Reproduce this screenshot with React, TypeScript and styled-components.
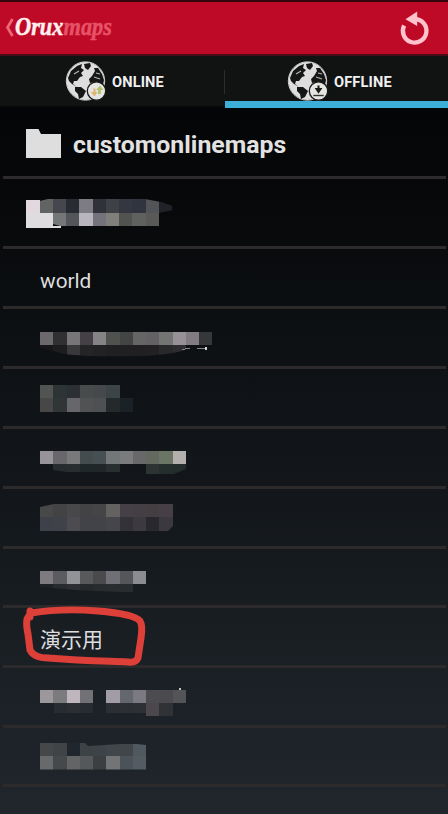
import React from "react";
import styled, { createGlobalStyle } from "styled-components";

const GlobalStyle = createGlobalStyle`
  *, *::before, *::after { box-sizing: border-box; }
  body { margin: 0; background: #050608; }
`;

const Screen = styled.div`
  width: 448px;
  height: 814px;
  overflow: hidden;
  display: flex;
  flex-direction: column;
  font-family: Roboto, "Noto Sans CJK SC", sans-serif;
  color: #dededf;
  background: linear-gradient(#040506 108px, #080a0c 240px, #0e1114 350px, #13171b 500px, #1a1f24 650px, #20262c 814px);
`;

const ActionBar = styled.header`
  height: 56px;
  flex: none;
  display: flex;
  align-items: center;
  justify-content: space-between;
  padding: 0 18px 0 5px;
  background: #bf0a27;
  border-top: 2px solid #35060c;
  border-bottom: 2px solid #490b15;
`;

const Tabs = styled.nav`
  height: 52px;
  flex: none;
  display: grid;
  grid-template-columns: 225px 223px;
  background: #111212;
`;

const Tab = styled.div<{ $active?: boolean }>`
  display: flex;
  align-items: flex-start;
  gap: 6px;
  padding: 4px 0 0 ${(p) => (p.$active ? 62 : 65)}px;
  height: 52px;
  border-bottom: ${(p) => (p.$active ? "7px solid #3caed7" : "2px solid #060707")};
`;

const Divider = styled.i`
  width: 1px;
  height: 24px;
  margin: 10px 0 0 auto;
  background: #2b2c2c;
`;

const TabLabel = styled.span`
  font-size: 14.6px;
  font-weight: 700;
  line-height: 20px;
  margin-top: 12px;
  letter-spacing: 0.15px;
  color: #f0f0f0;
  white-space: nowrap;
`;

const List = styled.main`
  padding: 0 2px 0 3px;
  display: flex;
  flex-direction: column;
`;

const Row = styled.div<{ $h: number; $top?: number; $left?: number }>`
  position: relative;
  height: ${(p) => p.$h}px;
  flex: none;
  display: flex;
  align-items: flex-start;
  padding: ${(p) => p.$top ?? 0}px 0 0 ${(p) => p.$left ?? 37}px;
  border-bottom: 3px solid #2d2a2b;
`;

const FolderName = styled.span`
  font-size: 24.8px;
  font-weight: 700;
  line-height: 30px;
  margin: 1px 0 0 12px;
  letter-spacing: 0.03px;
  color: #e2e2e2;
`;

const MapName = styled.span<{ $size?: number }>`
  font-size: ${(p) => p.$size ?? 20.8}px;
  line-height: 28px;
`;

const Drawing = styled.svg`
  display: block;
  flex: none;
  overflow: visible;
`;

const Marker = styled(Drawing)`
  position: absolute;
  left: 18px;
  top: -5px;
  z-index: 1;
`;

const CELL = 13.25;

type MosaicProps = { id: string; rows: string[][]; clip: string; children?: React.ReactNode };

function Mosaic({ id, rows, clip, children }: MosaicProps) {
  return (
    <Drawing width="180" height="27" viewBox="0 0 180 27" shapeRendering="crispEdges">
      <clipPath id={id}><path d={clip} /></clipPath>
      <g clipPath={`url(#${id})`}>
        {rows.map((row, y) => row.map((color, x) => (
          <rect key={`${x}-${y}`} x={x * CELL} y={y * CELL} width={CELL} height={CELL} fill={color || "none"} />
        )))}
      </g>
      {children}
    </Drawing>
  );
}

function Logo() {
  return (
    <Drawing width="110" height="36" viewBox="0 0 110 36">
      <path d="M7.5 9 2.5 17.5 7.5 26" fill="none" stroke="#ed6877" strokeWidth="2.7" />
      <text x="10" y="24.5" fontFamily="Liberation Serif, serif" fontStyle="italic" fontWeight="700" fontSize="26" textLength="97" lengthAdjust="spacingAndGlyphs" strokeWidth=".5">
        <tspan fill="#fff0f0" stroke="#fff0f0">Orux</tspan>
        <tspan fill="#e65367" stroke="#e65367">maps</tspan>
      </text>
    </Drawing>
  );
}

function Refresh() {
  return (
    <Drawing width="30" height="36" viewBox="398 10 30 36">
      <path d="M402.1 25.5A11.8 11.8 0 1 0 413 19" fill="none" stroke="#ffc3cd" strokeWidth="4.3" />
      <path d="M403.5 19.2 415.2 11.5V26Z" fill="#ffc3cd" />
    </Drawing>
  );
}

function Globe({ offline }: { offline?: boolean }) {
  return (
    <Drawing width="41" height="42" viewBox="0 0 41 42">
      <circle cx="20.5" cy="21" r="19.2" fill="#111212" stroke="#cacaca" strokeWidth="1" />
      <circle cx="20.5" cy="21" r="18.9" fill="#dedede" />
      <g fill="#151616">
        <path d="M3 18 6 11 12 6 17 4 16 8 19 10 16 13 18 16 15 17 12 21 9 21 8 24 12 27 7 24 4 21Z" />
        <path d="M19 4 25 3 26 6 23 10 20 8Z" />
        <path d="M10 27 16 27 21 31 18 37 14 39 13 34 10 31Z" />
        <path d="M27 16 30 11 29 8 33 8 37 14 39 20 38 25 33 25 30 22 25 23 24 19Z" />
      </g>
      <path d="M9 14 14 11M29 17 35 19M31 13 35 14" stroke="#b4b4b4" strokeWidth="1.2" />
      <circle cx="31.5" cy="31" r="9.2" fill="#e5e5e1" stroke="#171818" strokeWidth="1.3" />
      {offline ? (
        <>
          <path d="M31.5 25.5V29.5M29.5 29 31.5 32 33.5 29Z" fill="#191919" stroke="#191919" strokeWidth="2" />
          <path d="M26.3 35.5H36.7" stroke="#333" strokeWidth="1.4" />
        </>
      ) : (
        <>
          <path d="M28.5 28V32H25.8L29.5 36.5 32.5 32H30.5V29Z" fill="#e2b46f" />
          <path d="M33 34.5V30H31L35 25.5 38.5 30H36V33.5Z" fill="#b5c371" />
        </>
      )}
    </Drawing>
  );
}

function Folder() {
  return (
    <Drawing width="35" height="29" viewBox="0 0 35 29">
      <path d="M0 0H12.5L15 5H35V29H0Z" fill="#dedede" />
    </Drawing>
  );
}

export default function App() {
  return (
    <>
      <GlobalStyle />
      <Screen>
        <ActionBar><Logo /><Refresh /></ActionBar>
        <Tabs>
          <Tab><Globe /><TabLabel>ONLINE</TabLabel><Divider /></Tab>
          <Tab $active><Globe offline /><TabLabel>OFFLINE</TabLabel></Tab>
        </Tabs>
        <List>
          <Row $h={71} $top={21} $left={23}><Folder /><FolderName>customonlinemaps</FolderName></Row>
          <Row $h={70} $top={20} $left={23}>
            <Drawing width="150" height="29" viewBox="0 0 150 29">
              <path d="M0 1H14V14H27V27L35 27V29H0Z" fill="#dfdce0" />
              <path d="M0 1H13V13H0Z" fill="#e6d5df" opacity=".65" />
              <clipPath id="folder-cover"><path d="M13.5 2 22 0H119L135 3 147 7V11L133 14V27H34L27 25V14H13.5Z" /></clipPath>
              <g clipPath="url(#folder-cover)" shapeRendering="crispEdges">
                {["#626363", "#45464e", "#292b33", "#7d7c82", "#303139", "#3e4146", "#34373f", "#30343e", "#535457", "#202228"].map((c, i) => (
                  <rect key={i} x={13.5 + i * CELL} width={CELL} height="13.5" fill={c} />
                ))}
                {["#dddfe0", "#747777", "#54555b", "#b8b6bc", "#74737b", "#817f79", "#50534f", "#5e615e", "#595a58"].map((c, i) => (
                  <rect key={i} x={13.5 + i * CELL} y="13.5" width={CELL} height="13.5" fill={c} />
                ))}
              </g>
            </Drawing>
          </Row>
          <Row $h={60} $top={18}><MapName>world</MapName></Row>
          <Row $h={60} $top={23}>
            <Mosaic id="m4" clip="M0 0H173V13.3L145 18Q125 24 92 24Q45 25 25 22L0 16Z" rows={[
              ["#6b696b", "#303033", "#777577", "#444046", "#858386", "#505250", "#424543", "#656565", "#646164", "#757474", "#969196", "#827b82", "#353739"],
              ["#171719", "#1d1c1f", "#39383b", "#242326", "#222124", "#211f22", "#202023", "#211f22", "#222022", "#29282b", "#2d2c2f"],
            ]}>
              <path d="M142 17.5 150 16M157 16.5H166" stroke="#858585" strokeWidth="1" />
              <circle cx="166" cy="16.5" r="1.3" fill="#d3d3d3" />
            </Mosaic>
          </Row>
          <Row $h={60} $top={16}>
            <Mosaic id="m5" clip="M0 0H80V13H93V27H0Z" rows={[
              ["#525451", "#2d3435", "#2c2f34", "#474b4c", "#45494b", "#3c4447"],
              ["#474747", "#303536", "#67666b", "#515254", "#4e5051", "#24292c", "#1b2227"],
            ]} />
          </Row>
          <Row $h={60} $top={22}>
            <Mosaic id="m6" clip="M0 0H146V18L134 23H106V13H80V21H27L13 19V13H0Z" rows={[
              ["#969399", "#69666c", "#79797c", "#454c4e", "#465052", "#747777", "#797b7d", "#68686b", "#64695f", "#6b7566", "#b2afad"],
              ["", "#272d2e", "#272e2f", "#202729", "#202728", "#292f2f", "", "", "#2b3333", "#242e2d", "#242d2c"],
            ]} />
          </Row>
          <Row $h={60} $top={15}>
            <Mosaic id="m7" clip="M0 3 14 0H133V22L128 27H0Z" rows={[
              ["#484849", "#434345", "#48484a", "#434346", "#454548", "#636261", "#454046", "#433f44", "#443e43", "#463f45"],
              ["#3e4149", "#404249", "#4b4b50", "#424249", "#424249", "#45454b", "#333238", "#3c393f", "#29282e", "#3b383f"],
            ]} />
          </Row>
          <Row $h={59} $top={22}>
            <Mosaic id="m8" clip="M0 0H106V13.3H93V21H80L35 19 0 16Z" rows={[
              ["#7d7b7f", "#5b5c60", "#919397", "#58595a", "#4a4a4c", "#6f7075", "#555659", "#8b8c92"],
              ["#1e2226", "#282b2e", "#2c2e31", "#26292c", "#292c2e", "#2a2c2f", "#292c2f"],
            ]} />
          </Row>
          <Row $h={60} $top={18}>
            <MapName $size={21}>演示用</MapName>
            <Marker width="132" height="66" viewBox="21 603 132 66">
              <path d="M30 611V617M31 613Q62 608 98 611Q134 614 140 621Q143 626 141 638L138 658Q136 663 128 662C104 661 85 661 48 658Q34 658 30 650L28 634Q26 625 27 619L30 614" fill="none" stroke="#dc4039" strokeWidth="7" strokeLinecap="round" strokeLinejoin="round" />
            </Marker>
          </Row>
          <Row $h={60} $top={22}>
            <Mosaic id="m10" clip="M0 0H146V13.5H133V26H106V23H66V13.5H53V23H14V13.5H0Z" rows={[
              ["#9b979b", "#7b7a7d", "#beb6bc", "#727276", "", "#a29da4", "#65676e", "#7c7a81", "#4b4b50", "#4b4b4f", "#545457"],
              ["", "#282c30", "#2b2e32", "#282c30", "", "#2b2e32", "#2c2f33", "#2e3034", "#4b474c", "#303236"],
            ]}><circle cx="140" cy="-1" r="1.2" fill="#c4c4c4" /></Mosaic>
          </Row>
          <Row $h={59} $top={15}>
            <Mosaic id="m11" clip="M0 0H45L48 3 80 1H97L106 2V26.5H0Z" rows={[
              ["#454749", "#414446", "#20262d", "#3d4245", "#3e4347", "#40464a", "#41464a", "#505960"],
              ["#68696a", "#46494b", "#626466", "#54585a", "#3b3f42", "#737475", "#4b5259", "#535b63"],
            ]} />
          </Row>
        </List>
      </Screen>
    </>
  );
}
